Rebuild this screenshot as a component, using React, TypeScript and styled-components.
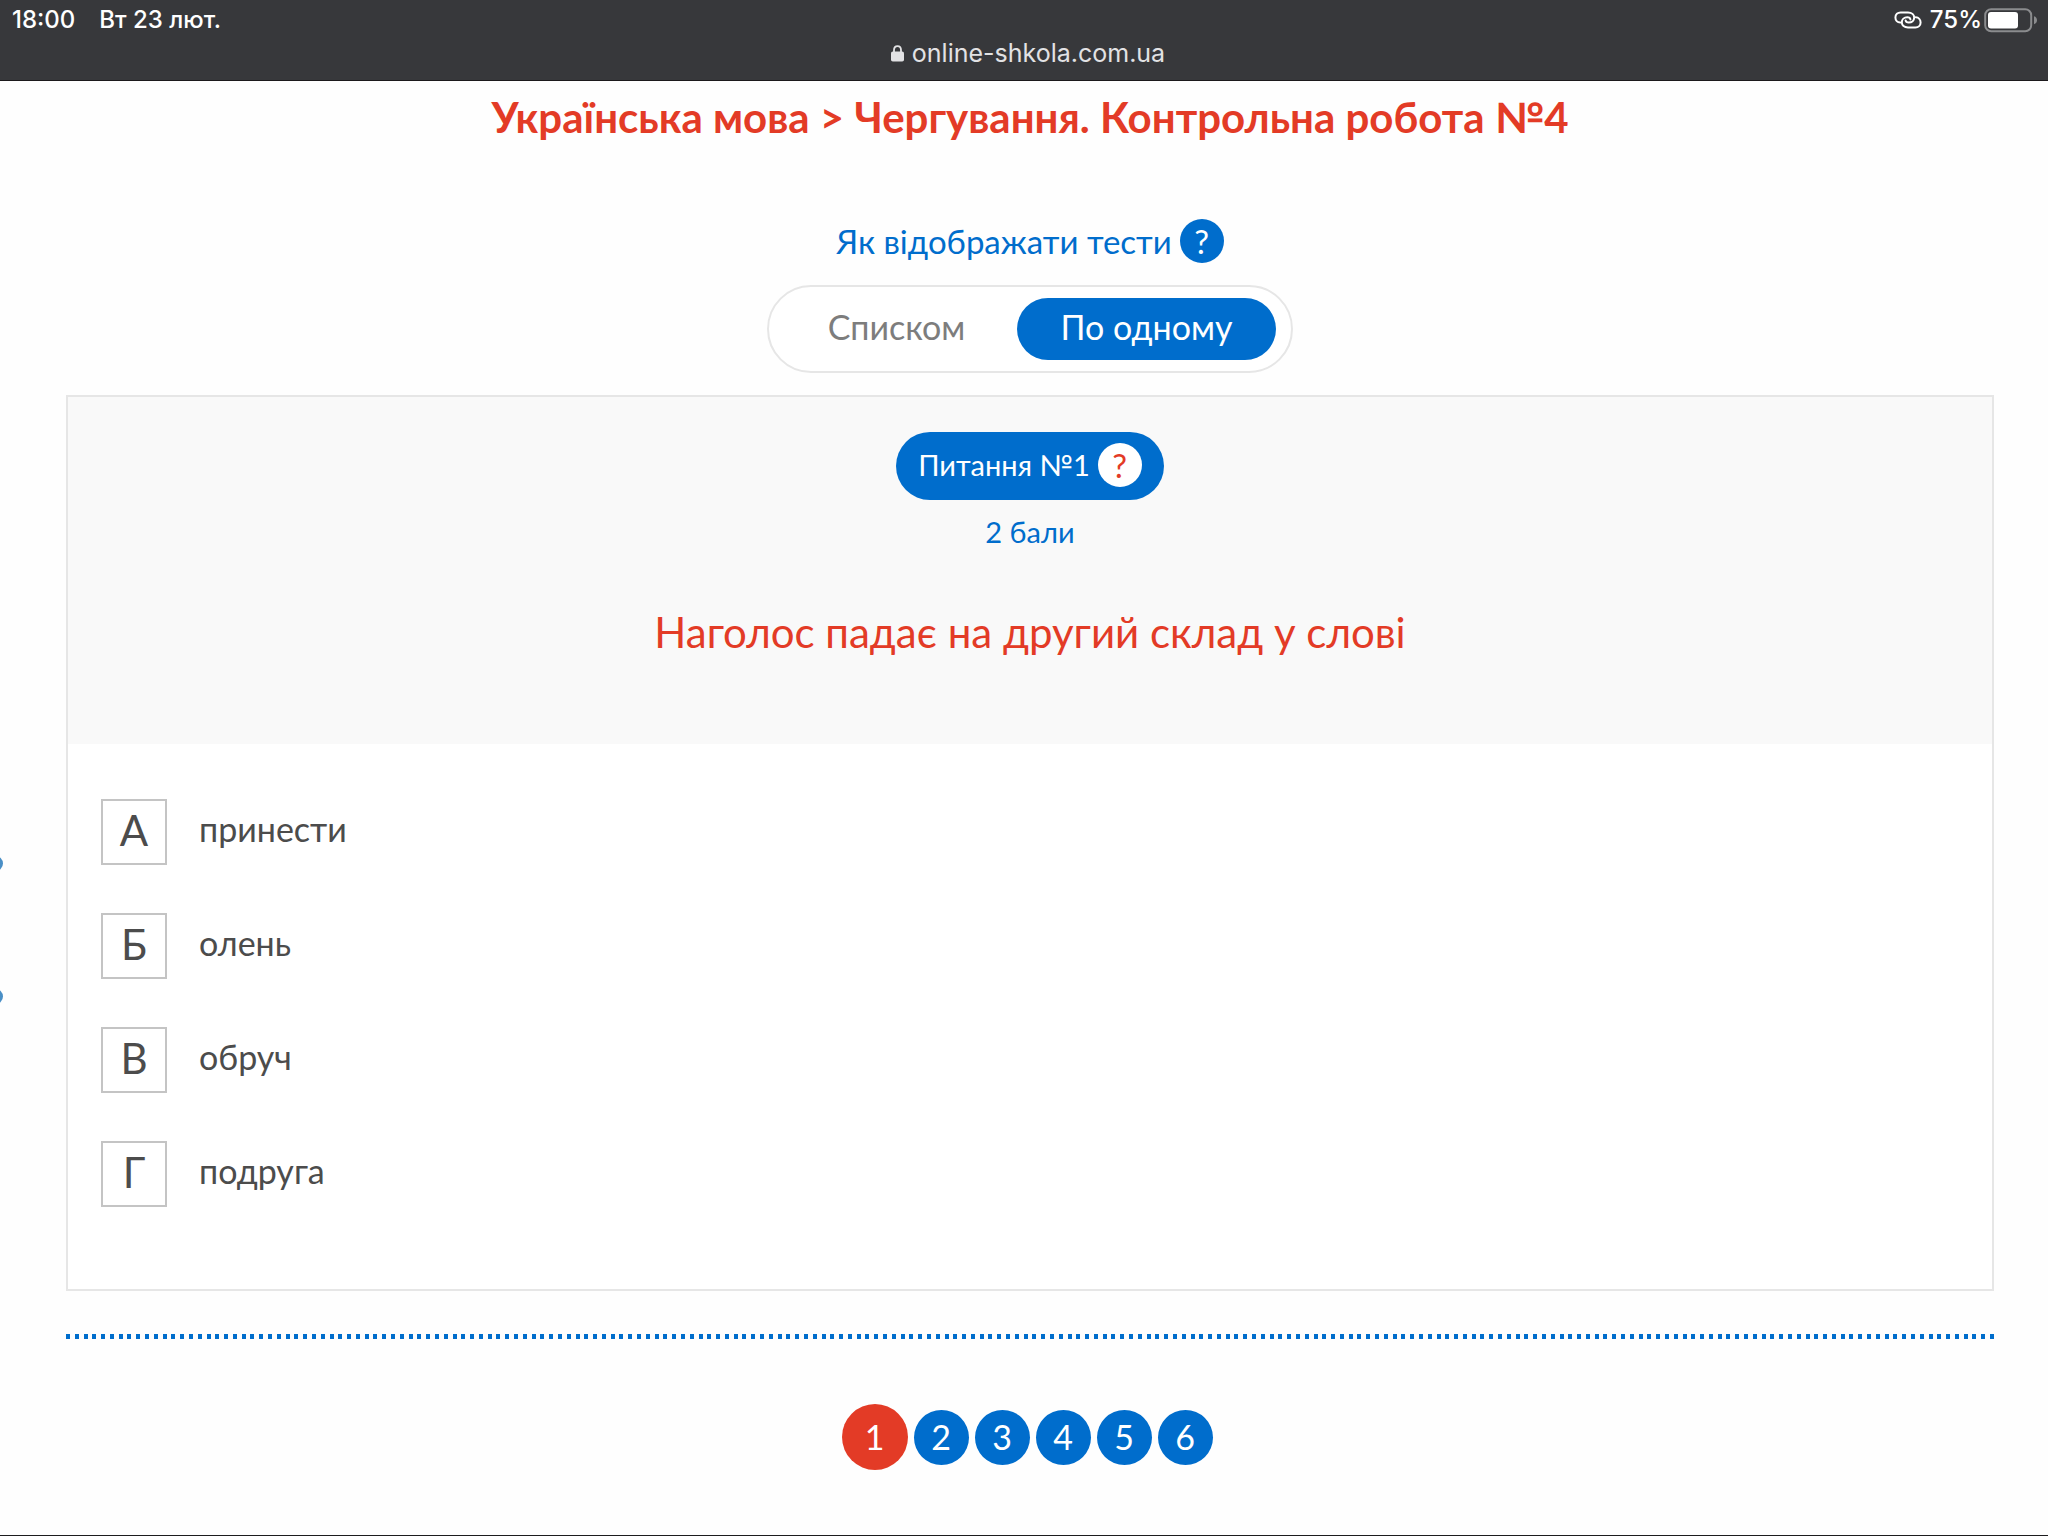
import React, { useState } from "react";
import styled, { createGlobalStyle } from "styled-components";

const blue = "#006dcc";
const red = "#e33b26";

const Global = createGlobalStyle`
  *, *::before, *::after { box-sizing: border-box; }
  body {
    margin: 0;
    background: #fefefe;
    font-family: Lato, "Open Sans", sans-serif;
  }
  button { font-family: inherit; border: 0; padding: 0; cursor: pointer; }
`;

const Page = styled.div`
  position: relative;
  min-height: 100vh;
  overflow: hidden;
  border-bottom: 1px solid #1c1c1e;
`;

const BrowserBar = styled.header`
  height: 81px;
  padding: 4px 10px 0 12px;
  background: #37383b;
  border-bottom: 1px solid #1c191c;
  color: #fff;
  font-family: Inter, "Liberation Sans", sans-serif;
`;

const StatusRow = styled.div`
  display: flex;
  justify-content: space-between;
  height: 32px;
  font-size: 24px;
  line-height: 32px;
  font-weight: 500;
`;

const StatusGroup = styled.div<{ $gap: number }>`
  display: flex;
  align-items: center;
  gap: ${(p) => p.$gap}px;
`;

const Address = styled.div`
  display: flex;
  align-items: center;
  justify-content: center;
  gap: 8px;
  height: 34px;
  padding-left: 6px;
  color: #e2e2e4;
  font-size: 25px;
  line-height: 34px;
`;

const Main = styled.main`
  display: flex;
  flex-direction: column;
  padding: 8px 54px 65px 66px;
`;

const Title = styled.h1`
  margin: 0 0 74px;
  color: ${red};
  font-size: 42px;
  line-height: 56px;
  font-weight: 700;
  text-align: center;
`;

const DisplayMode = styled.section`
  display: flex;
  flex-direction: column;
  align-items: center;
  gap: 22px;
  margin-bottom: 22px;
`;

const ModeCaption = styled.div`
  display: flex;
  align-items: center;
  gap: 8px;
  color: ${blue};
  font-size: 33px;
  line-height: 44px;
`;

const HelpButton = styled.button<{ $inverse?: boolean }>`
  width: 44px;
  height: 44px;
  border-radius: 50%;
  background: ${(p) => (p.$inverse ? "#fff" : blue)};
  color: ${(p) => (p.$inverse ? red : "#fff")};
  font-size: 33px;
  line-height: 42px;
`;

const Toggle = styled.div`
  display: flex;
  align-items: center;
  padding: 11px 15px 11px 7px;
  border: 2px solid #e6e6e6;
  border-radius: 44px;
  background: #fff;
`;

const ToggleOption = styled.button<{ $active: boolean }>`
  min-width: ${(p) => (p.$active ? 259 : 241)}px;
  height: 62px;
  padding-bottom: 4px;
  border-radius: 31px;
  background: ${(p) => (p.$active ? blue : "transparent")};
  color: ${(p) => (p.$active ? "#fff" : "#7d7d7d")};
  font-size: 34px;
  line-height: 58px;
`;

const Card = styled.section`
  border: 2px solid #e6e6e6;
  background: #fff;
`;

const Question = styled.div`
  display: flex;
  flex-direction: column;
  align-items: center;
  padding: 35px 24px 84px;
  background: #f9f9f9;
`;

const QuestionBadge = styled.div`
  display: flex;
  align-items: center;
  gap: 8px;
  height: 68px;
  padding: 0 22px 2px;
  border-radius: 34px;
  background: ${blue};
  color: #fff;
  font-size: 29px;
  line-height: 44px;
`;

const Points = styled.p`
  margin: 12px 0 52px;
  color: ${blue};
  font-size: 29px;
  line-height: 40px;
`;

const QuestionText = styled.h2`
  margin: 0;
  color: ${red};
  font-size: 42px;
  line-height: 56px;
  font-weight: 400;
  text-align: center;
`;

const Answers = styled.div`
  display: flex;
  flex-direction: column;
  gap: 48px;
  padding: 55px 33px 82px;
`;

const Answer = styled.label`
  position: relative;
  display: flex;
  align-items: flex-start;
  align-self: flex-start;
  gap: 32px;
  color: #4c4c4c;
  font-size: 34px;
  line-height: 60px;
  cursor: pointer;
`;

const AnswerInput = styled.input`
  position: absolute;
  inset: 0;
  margin: 0;
  opacity: 0;
`;

const LetterBox = styled.span`
  width: 66px;
  height: 66px;
  border: 2px solid #c4c4c4;
  font-size: 42px;
  line-height: 58px;
  text-align: center;

  input:checked + & {
    border-color: ${blue};
  }
`;

const DottedRule = styled.hr`
  width: 100%;
  height: 5px;
  margin: 43px 0 65px;
  border: 0;
  background: repeating-linear-gradient(
    90deg,
    ${blue} 0 4px,
    transparent 4px calc((100% - 4px) / 219)
  );
`;

const Pages = styled.nav`
  display: flex;
  justify-content: center;
  align-items: center;
`;

const PageButton = styled.button<{ $current: boolean }>`
  width: ${(p) => (p.$current ? 66 : 55)}px;
  height: ${(p) => (p.$current ? 66 : 55)}px;
  margin-right: 6px;
  border-radius: 50%;
  background: ${(p) => (p.$current ? red : blue)};
  color: #fff;
  font-size: 34px;
  line-height: 54px;
`;

const EdgeDot = styled.span<{ $top: number }>`
  position: absolute;
  left: -12px;
  top: ${(p) => p.$top}px;
  width: 15px;
  height: 15px;
  border-radius: 50%;
  background: #4a8fc6;
`;

const LinkIcon = () => (
  <svg width="28" height="18" viewBox="0 0 28 18" fill="none" stroke="#fff" strokeWidth="2" strokeLinecap="round">
    <path d="M6.2 11.6 C3.4 11.4 1.4 9.2 1.4 6.4 C1.4 3.4 3.6 1.4 6.6 1.4 H14 C17.8 1.4 20.2 3.7 20.2 6.5 C20.2 9.5 17.8 11.6 14.8 11.6 C13 11.6 11.8 10.9 11.6 9.4" />
    <path d="M21.8 6.2 C24.6 6.4 26.6 8.6 26.6 11.4 C26.6 14.4 24.4 16.4 21.4 16.4 H14 C10.2 16.4 7.8 14.1 7.8 11.3 C7.8 8.3 10.2 6.2 13.2 6.2 C15 6.2 16.2 6.9 16.4 8.4" />
  </svg>
);

const BatteryIcon = () => (
  <svg width="54" height="26" viewBox="0 0 54 26">
    <rect x="1.2" y="2.2" width="46" height="22" rx="6" fill="none" stroke="#8b8c8e" strokeWidth="2" />
    <rect x="4" y="5" width="30" height="16.4" rx="3" fill="#fff" />
    <path d="M50 9.2 C52 9.8 53 11.4 53 13.2 C53 15 52 16.6 50 17.2 Z" fill="#8b8c8e" />
  </svg>
);

const LockIcon = () => (
  <svg width="13" height="17" viewBox="0 0 13 17">
    <path d="M3 8 V5 C3 2.6 4.6 1.2 6.5 1.2 C8.4 1.2 10 2.6 10 5 V8" fill="none" stroke="#e2e2e4" strokeWidth="1.8" />
    <rect x="0" y="6.4" width="13" height="10.2" rx="1.8" fill="#e2e2e4" />
  </svg>
);

const modes = ["Списком", "По одному"];
const answers = [
  ["А", "принести"],
  ["Б", "олень"],
  ["В", "обруч"],
  ["Г", "подруга"],
];
const pages = [1, 2, 3, 4, 5, 6];

export default function App() {
  const [mode, setMode] = useState("По одному");
  const [page, setPage] = useState(1);

  return (
    <>
      <Global />
      <Page>
        <BrowserBar>
          <StatusRow>
            <StatusGroup $gap={24}>
              <span>18:00</span>
              <span>Вт 23 лют.</span>
            </StatusGroup>
            <StatusGroup $gap={8}>
              <LinkIcon />
              <StatusGroup $gap={2}>
                <span>75%</span>
                <BatteryIcon />
              </StatusGroup>
            </StatusGroup>
          </StatusRow>
          <Address>
            <LockIcon />
            <span>online-shkola.com.ua</span>
          </Address>
        </BrowserBar>

        <Main>
          <Title>Українська мова &gt; Чергування. Контрольна робота №4</Title>

          <DisplayMode>
            <ModeCaption>
              <span>Як відображати тести</span>
              <HelpButton type="button">?</HelpButton>
            </ModeCaption>
            <Toggle>
              {modes.map((m) => (
                <ToggleOption
                  key={m}
                  type="button"
                  $active={m === mode}
                  aria-pressed={m === mode}
                  onClick={() => setMode(m)}
                >
                  {m}
                </ToggleOption>
              ))}
            </Toggle>
          </DisplayMode>

          <Card>
            <Question>
              <QuestionBadge>
                <span>Питання №1</span>
                <HelpButton type="button" $inverse>?</HelpButton>
              </QuestionBadge>
              <Points>2 бали</Points>
              <QuestionText>Наголос падає на другий склад у слові</QuestionText>
            </Question>
            <Answers>
              {answers.map(([letter, text]) => (
                <Answer key={letter}>
                  <AnswerInput type="radio" name="answer" value={letter} />
                  <LetterBox>{letter}</LetterBox>
                  <span>{text}</span>
                </Answer>
              ))}
            </Answers>
          </Card>

          <DottedRule />

          <Pages>
            {pages.map((n) => (
              <PageButton key={n} type="button" $current={n === page} onClick={() => setPage(n)}>
                {n}
              </PageButton>
            ))}
          </Pages>
        </Main>

        <EdgeDot $top={856} />
        <EdgeDot $top={989} />
      </Page>
    </>
  );
}
